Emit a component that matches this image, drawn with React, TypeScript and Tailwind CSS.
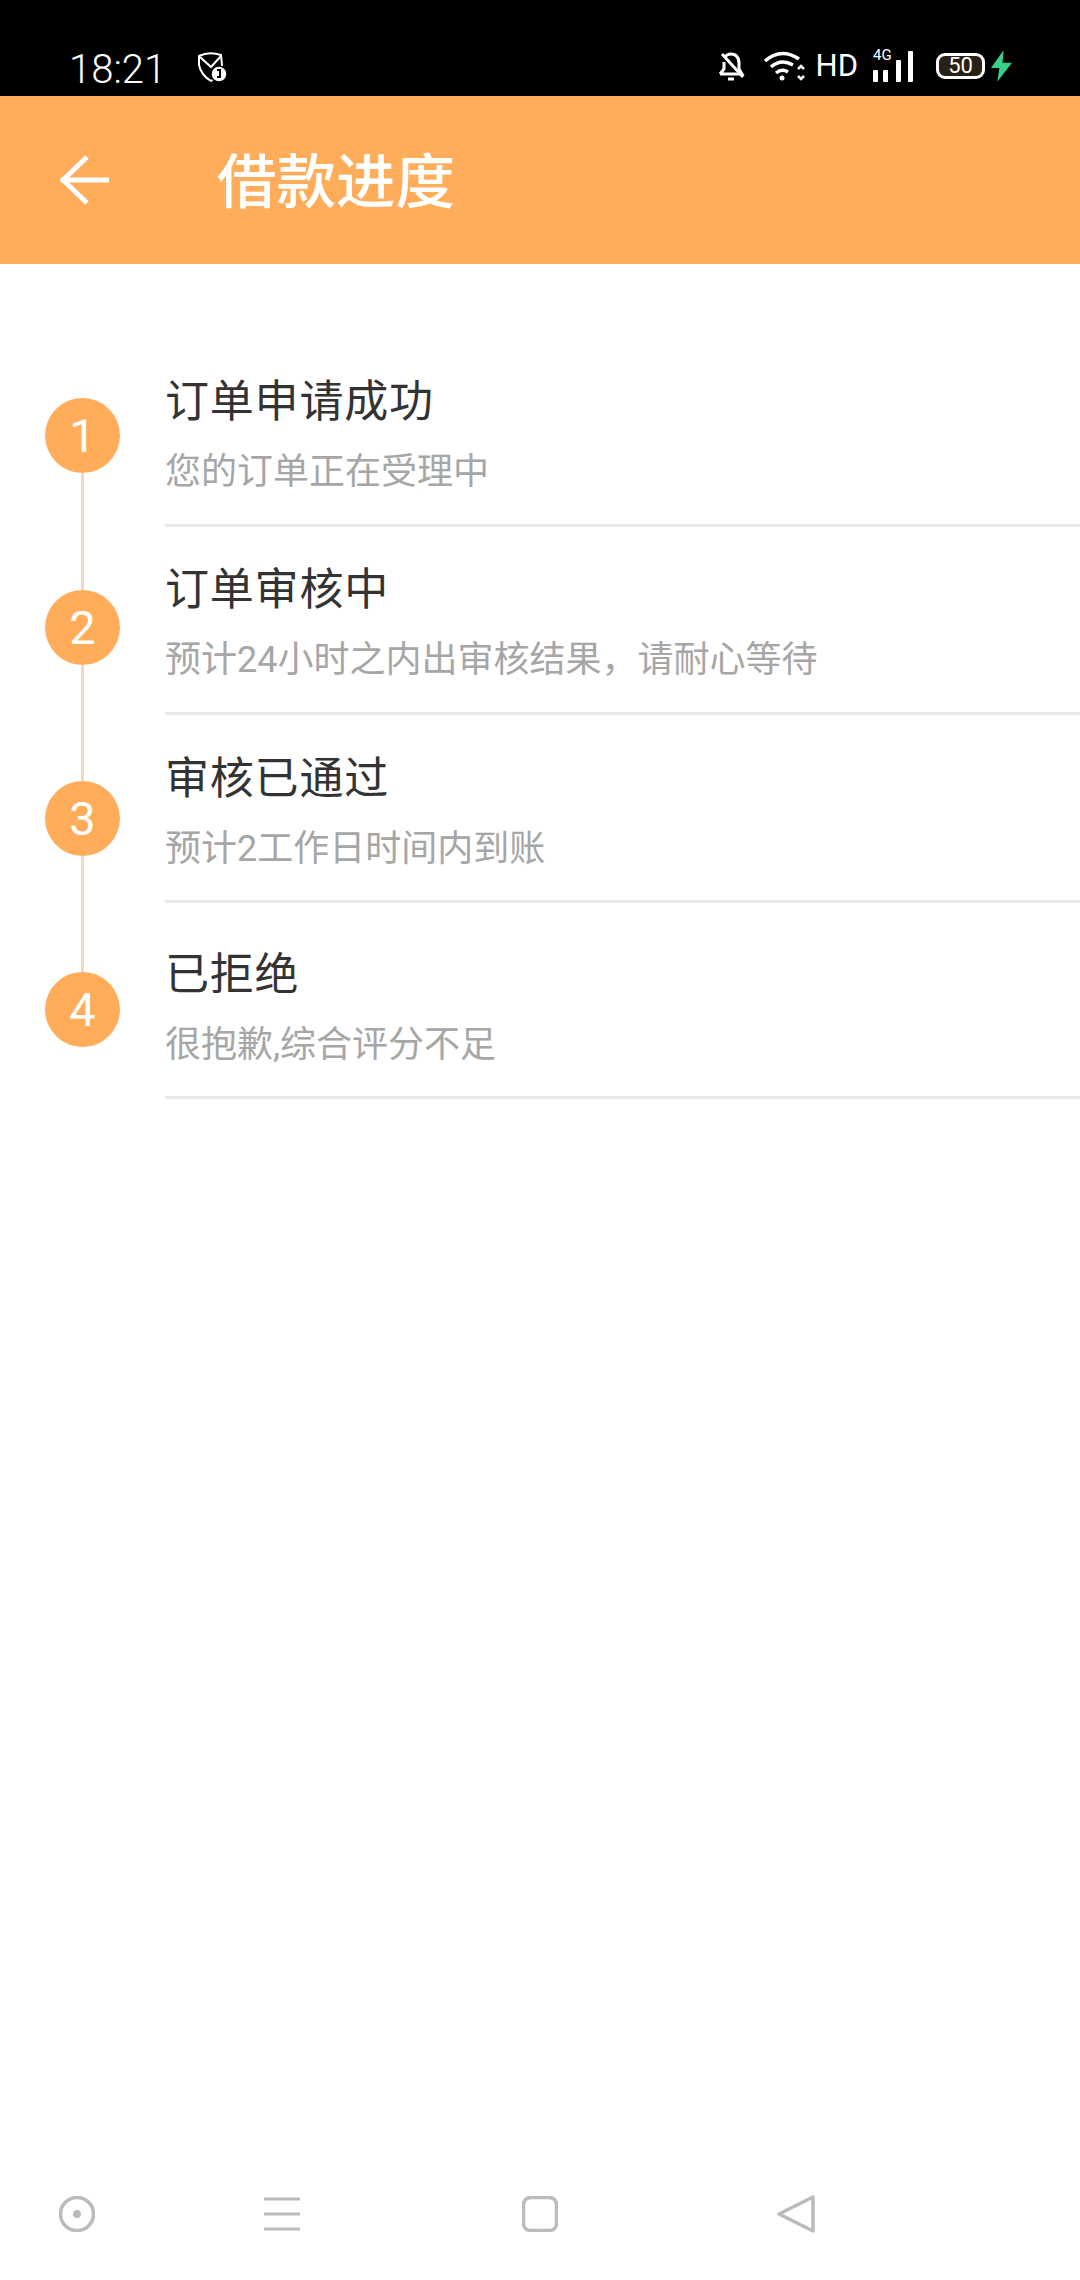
const steps = [
  { n: "1", title: "订单申请成功", sub: "您的订单正在受理中", row: "h-[191px]", top: "h-[62px]", text: "pt-[40px]" },
  { n: "2", title: "订单审核中", sub: "预计24小时之内出审核结果，请耐心等待", row: "h-[188px]", top: "h-[63px] bg-[#fad4c4]", text: "pt-[37px]" },
  { n: "3", title: "审核已通过", sub: "预计2工作日时间内到账", row: "h-[188px]", top: "h-[66px] bg-[#fad4c4]", text: "pt-[38px]" },
  { n: "4", title: "已拒绝", sub: "很抱歉,综合评分不足", row: "h-[196px]", top: "h-[69px] bg-[#fad4c4]", text: "pt-[46px]" },
];

const StatusBar = () => (
  <div className="h-[96px] bg-black text-white flex items-end shrink-0">
    <span className="ml-[69px] mb-[3px] text-[40px] leading-[46px] font-light">18:21</span>
    <svg className="ml-[30px] mb-[13px]" width="32" height="32" viewBox="0 0 32 32" fill="none">
      <path d="M3 5 Q13 0 25 4 L26 14 Q24 25 15 30 Q5 24 3 14 Z" stroke="#fff" strokeWidth="2" />
      <path d="M4 6 L15 16 L25 5" stroke="#fff" strokeWidth="2" />
      <circle cx="23" cy="23" r="8" fill="#fff" stroke="#000" strokeWidth="1.5" />
      <path d="M21 19 H24 V27 M21 26 H24" stroke="#000" strokeWidth="2" />
    </svg>
    <div className="ml-auto mr-[68px] mb-[14px] flex items-end">
      <svg width="28" height="32" viewBox="0 0 28 32" fill="none" stroke="#fff" strokeWidth="3">
        <path d="M2 24 H24 L21 19 V12 Q20 4 13 4 Q9 4 7 7 M6 12 V19 L2 24" />
        <path d="M4 4 L25 27" />
        <path d="M10 29 H16" />
      </svg>
      <svg className="ml-[18px]" width="42" height="32" viewBox="0 0 42 32" fill="none" stroke="#fff" strokeWidth="3.5">
        <path d="M1 11 Q17 -3 35 9" />
        <path d="M7 17 Q17 8 29 15" />
        <path d="M12 23 Q18 18 24 22" />
        <circle cx="18" cy="28" r="2.5" fill="#fff" stroke="none" />
        <path d="M34 19 L37 16 L40 19 M34 26 L37 29 L40 26" strokeWidth="2.5" />
      </svg>
      <span className="ml-[10px] text-[31px] leading-[32px] font-normal">HD</span>
      <div className="relative ml-[15px] w-[46px] h-[32px]">
        <span className="absolute left-0 top-[-3px] text-[15px] leading-[17px]">4G</span>
        <svg width="46" height="32" viewBox="0 0 46 32" fill="#fff">
          <rect x="0" y="20" width="5" height="12" rx="1" />
          <rect x="10" y="20" width="5" height="12" rx="1" />
          <rect x="23" y="10" width="5" height="22" rx="1" />
          <rect x="35" y="1" width="5" height="31" rx="1" />
        </svg>
      </div>
      <div className="ml-[17px] mb-[3px] w-[49px] h-[26px] rounded-[9px] border-[3px] border-white bg-[#2a2115] flex items-center justify-center text-[22px] leading-none">
        50
      </div>
      <svg className="ml-[6px]" width="21" height="32" viewBox="0 0 20 30" fill="#34d08c">
        <path d="M12 0 L0 17 H8 L6 30 L20 12 H11 Z" />
      </svg>
    </div>
  </div>
);

const Header = () => (
  <div className="h-[168px] bg-[#ffad5a] flex items-center shrink-0">
    <svg className="ml-[60px]" width="50" height="50" viewBox="0 0 50 50" fill="none" stroke="#fff" strokeWidth="5">
      <path d="M1 25 H49" />
      <path d="M27 2 L3 25 L27 48" />
    </svg>
    <h1 className="ml-[107px] mt-[6px] text-[59.5px] leading-[80px] font-medium text-white">借款进度</h1>
  </div>
);

const NavBar = () => (
  <div className="h-[84px] flex items-start shrink-0 pl-[59px] mb-[2px] pt-[2px]">
    <svg width="36" height="36" viewBox="0 0 36 36" fill="none" stroke="#bbb" strokeWidth="3.5">
      <circle cx="18" cy="18" r="16.5" />
      <circle cx="18" cy="18" r="4" fill="#bbb" stroke="none" />
    </svg>
    <svg className="ml-[169px]" width="36" height="36" viewBox="0 0 36 36" fill="none" stroke="#bbb" strokeWidth="3">
      <path d="M0 3 H36 M0 18 H36 M0 33 H36" />
    </svg>
    <svg className="ml-[222px]" width="36" height="36" viewBox="0 0 36 36" fill="none" stroke="#bbb" strokeWidth="3.5">
      <rect x="1.5" y="1.5" width="33" height="33" rx="7" />
    </svg>
    <svg className="ml-[219px] mt-[-1px]" width="38" height="38" viewBox="0 0 38 38" fill="none" stroke="#bbb" strokeWidth="3.5" strokeLinejoin="round">
      <path d="M36 2 V36 L2 19 Z" />
    </svg>
  </div>
);

export default function App() {
  return (
    <div className="w-[1080px] h-[2280px] bg-white flex flex-col font-['Roboto','Noto_Sans_CJK_SC',sans-serif]">
      <StatusBar />
      <Header />
      <div className="flex-1 pt-[72px]">
        {steps.map((s, i) => (
          <div key={s.n} className={`flex ${s.row}`}>
            <div className="w-[165px] shrink-0 pl-[45px]">
              <div className="w-[75px] h-full flex flex-col items-center">
                <div className={`w-[3px] ${s.top}`} />
                <div className="w-[75px] h-[75px] shrink-0 rounded-full bg-[#ffad5a] text-white text-[47px] pt-[2px] flex items-center justify-center">
                  {s.n}
                </div>
                <div className={`w-[3px] flex-1 ${i === 3 ? "" : "bg-[#fad4c4]"}`} />
              </div>
            </div>
            <div className={`flex-1 border-b-[3px] border-[#e8e8e8] ${s.text}`}>
              <div className="text-[44px] leading-[52px] text-[#333333] tracking-[0.8px]">{s.title}</div>
              <div className="mt-[22px] text-[36px] leading-[44px] text-[#a6a6a6]">{s.sub}</div>
            </div>
          </div>
        ))}
      </div>
      <NavBar />
    </div>
  );
}
